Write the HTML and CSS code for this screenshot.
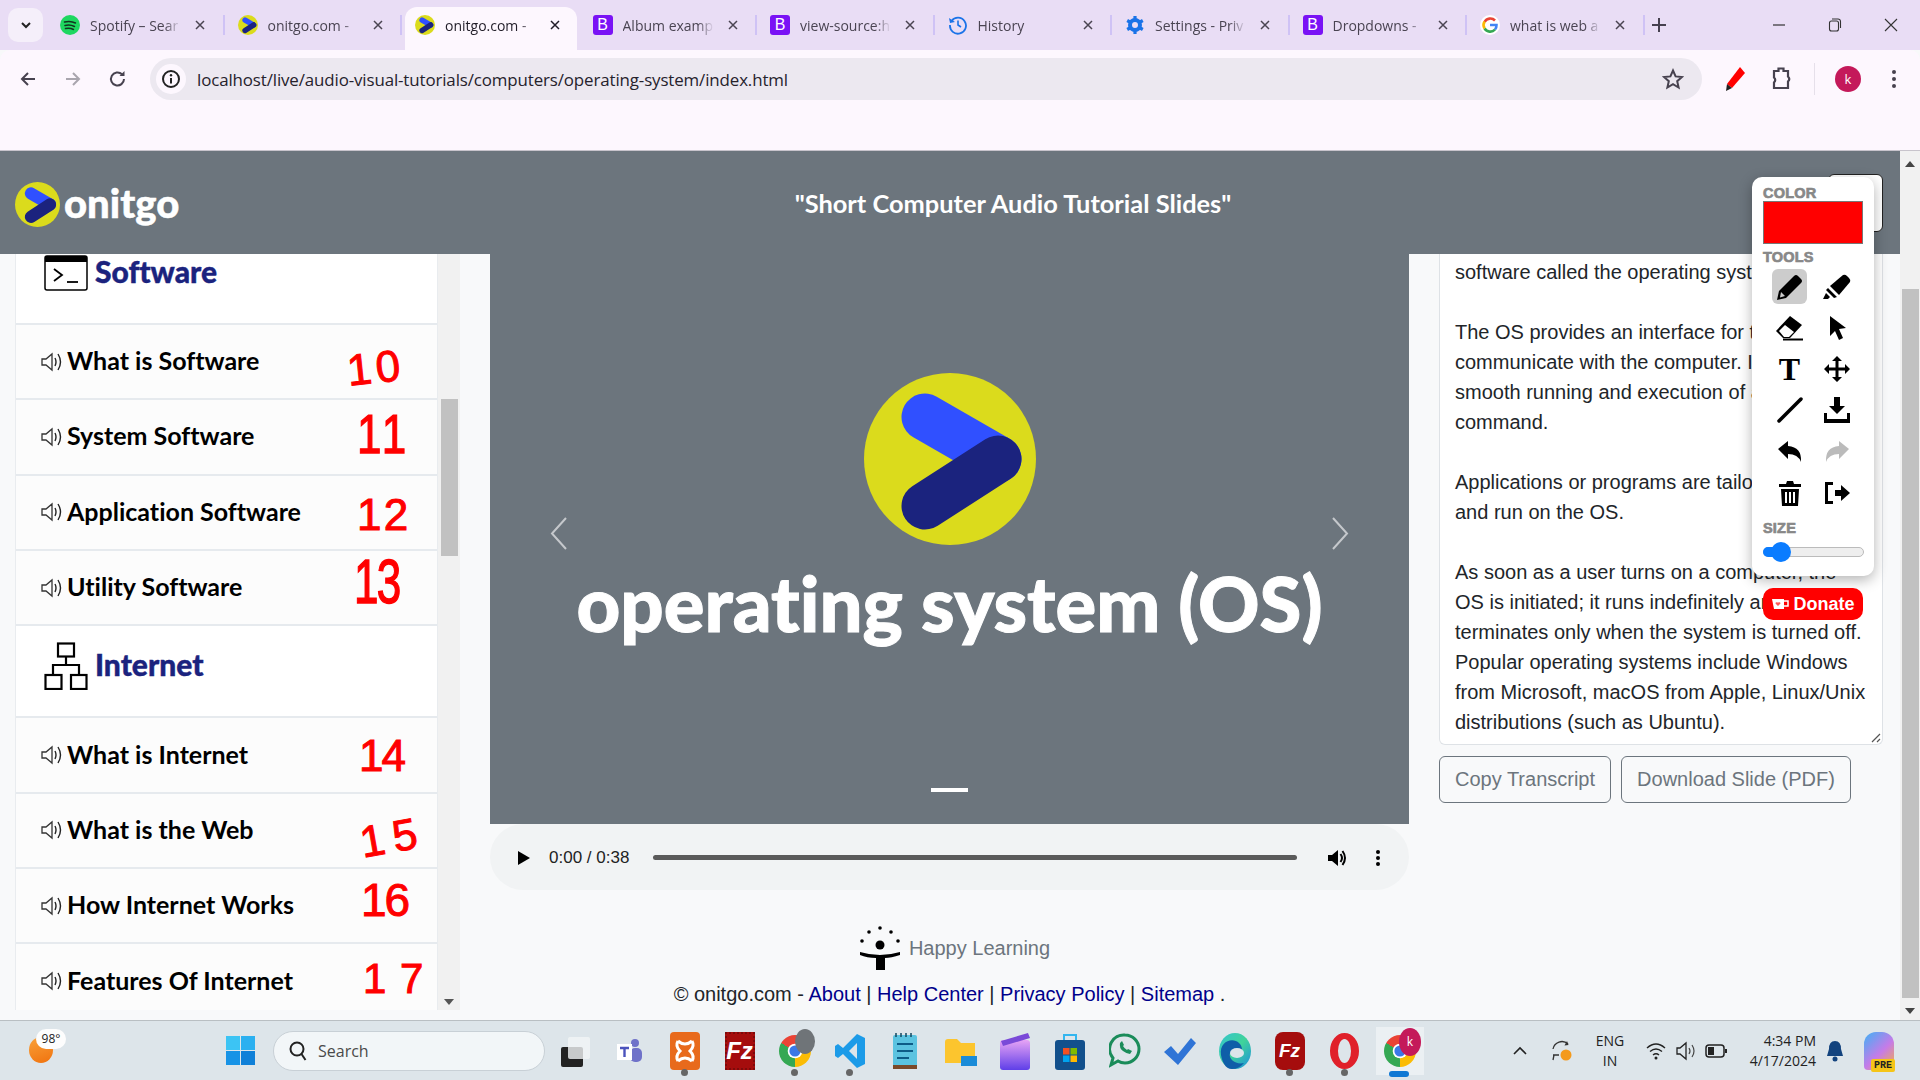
FILE: index.html
```html
<!DOCTYPE html>
<html lang="en">
<head>
<meta charset="utf-8">
<title>onitgo.com - Operating System</title>
<link rel="stylesheet" href="styles.css">
</head>
<body>
<svg class="defs" width="0" height="0" aria-hidden="true">
  <defs>
    <symbol id="onitgo" viewBox="0 0 172 172">
      <circle cx="86" cy="86" r="86" fill="#dbdb1c"/>
      <path d="M61 44 L134 86" stroke="#3050ff" stroke-width="47" stroke-linecap="round"/>
      <path d="M61 133 L134 86" stroke="#1b237e" stroke-width="47" stroke-linecap="round"/>
    </symbol>
    <symbol id="speaker" viewBox="0 0 22 20">
      <path d="M1 7h4l6-5v16l-6-5H1z" fill="none" stroke="#333" stroke-width="1.3"/>
      <path d="M14 6q2 4 0 8M17 2q5 8 0 16" fill="none" stroke="#222" stroke-width="1.4"/>
    </symbol>
    <symbol id="close" viewBox="0 0 12 12">
      <path d="M2 2l8 8M10 2l-8 8" stroke="currentColor" stroke-width="1.5"/>
    </symbol>
    <symbol id="chrome-arc" viewBox="0 0 24 24">
      <circle cx="12" cy="12" r="5.500" fill="#fff"/>
      <circle cx="12" cy="12" r="4.200" fill="#3b78e7"/>
    </symbol>
  </defs>
</svg>

<div class="screen">
  <header class="tabstrip">
    <button class="tablist"><svg width="14" height="14" viewBox="0 0 14 14"><path d="M3 5l4 4 4-4" fill="none" stroke="#222" stroke-width="2"/></svg></button>
    <div class="tab sep">
      <svg class="fav" viewBox="0 0 20 20"><circle cx="10" cy="10" r="10" fill="#1ed760"/><path d="M4.500 7q6-1.600 11 1M5 10.500q5-1.300 9.500 1M5.500 13.500q4.500-1 8 1" stroke="#12331f" stroke-width="1.500" fill="none" stroke-linecap="round"/></svg>
      <span class="tab-title">Spotify – Sear</span><svg class="tab-x"><use href="#close"/></svg>
    </div>
    <div class="tab sep">
      <svg class="fav"><use href="#onitgo"/></svg>
      <span class="tab-title">onitgo.com -</span><svg class="tab-x"><use href="#close"/></svg>
    </div>
    <div class="tab active">
      <svg class="fav"><use href="#onitgo"/></svg>
      <span class="tab-title">onitgo.com -</span><svg class="tab-x"><use href="#close"/></svg>
    </div>
    <div class="tab sep">
      <span class="fav fav-b">B</span>
      <span class="tab-title">Album examp</span><svg class="tab-x"><use href="#close"/></svg>
    </div>
    <div class="tab sep">
      <span class="fav fav-b">B</span>
      <span class="tab-title">view-source:h</span><svg class="tab-x"><use href="#close"/></svg>
    </div>
    <div class="tab sep">
      <svg class="fav" viewBox="0 0 20 20"><path d="M3.500 6A8 8 0 1 1 2 10" fill="none" stroke="#1a73e8" stroke-width="1.800"/><path d="M1 3l1 5 5-1z" fill="#1a73e8"/><path d="M10 5.500V10l3 2" fill="none" stroke="#1a73e8" stroke-width="1.600"/></svg>
      <span class="tab-title">History</span><svg class="tab-x"><use href="#close"/></svg>
    </div>
    <div class="tab sep">
      <svg class="fav" viewBox="0 0 20 20"><circle cx="10" cy="10" r="5" fill="none" stroke="#1a73e8" stroke-width="4"/><path d="M10 1v18M2.200 5.500l15.600 9M17.800 5.500l-15.600 9" stroke="#1a73e8" stroke-width="3.200" stroke-dasharray="3.500 11 3.500"/></svg>
      <span class="tab-title">Settings - Priv</span><svg class="tab-x"><use href="#close"/></svg>
    </div>
    <div class="tab sep">
      <span class="fav fav-b">B</span>
      <span class="tab-title">Dropdowns -</span><svg class="tab-x"><use href="#close"/></svg>
    </div>
    <div class="tab sep">
      <svg class="fav" viewBox="0 0 20 20"><circle cx="10" cy="10" r="10" fill="#fff"/><path d="M15 5.500A6.500 6.500 0 0 0 4.600 7" fill="none" stroke="#ea4335" stroke-width="2.600"/><path d="M4.600 6.500a6.500 6.500 0 0 0 0 7" fill="none" stroke="#fbbc05" stroke-width="2.600"/><path d="M4.600 13.500A6.500 6.500 0 0 0 15 14.500" fill="none" stroke="#34a853" stroke-width="2.600"/><path d="M15 14.500a6.500 6.500 0 0 0 1.500-4.500H10" fill="none" stroke="#4285f4" stroke-width="2.600"/></svg>
      <span class="tab-title">what is web a</span><svg class="tab-x"><use href="#close"/></svg>
    </div>
    <svg class="newtab" width="16" height="16" viewBox="0 0 16 16"><path d="M8 1v14M1 8h14" stroke="#46404f" stroke-width="2"/></svg>
    <div class="winctl">
      <svg width="14" height="14" viewBox="0 0 14 14"><path d="M1 7h12" stroke="#333" stroke-width="1.200"/></svg>
      <svg width="14" height="14" viewBox="0 0 14 14"><rect x="1.500" y="3" width="9" height="10" rx="2" fill="none" stroke="#333" stroke-width="1.100"/><path d="M4 1h6a2.500 2.500 0 0 1 2.500 2.500V10" fill="none" stroke="#333" stroke-width="1.100"/></svg>
      <svg width="14" height="14" viewBox="0 0 14 14"><path d="M1 1l12 12M13 1L1 13" stroke="#333" stroke-width="1.100"/></svg>
    </div>
  </header>

  <nav class="toolbar">
    <svg class="nav-ic" viewBox="0 0 20 20"><path d="M17 10H4M10 4l-6 6 6 6" fill="none" stroke="#47424f" stroke-width="2"/></svg>
    <svg class="nav-ic" viewBox="0 0 20 20"><path d="M3 10h13M10 4l6 6-6 6" fill="none" stroke="#a9a5ae" stroke-width="2"/></svg>
    <svg class="nav-ic" viewBox="0 0 20 20"><path d="M16 10a6.500 6.500 0 1 1-2-4.700" fill="none" stroke="#47424f" stroke-width="2"/><path d="M16.500 2v5h-5z" fill="#47424f"/></svg>
    <div class="omnibox">
      <span class="site-info"><svg width="20" height="20" viewBox="0 0 20 20"><circle cx="10" cy="10" r="8" fill="none" stroke="#222" stroke-width="2"/><path d="M10 9v5.500" stroke="#222" stroke-width="2"/><circle cx="10" cy="6.300" r="1.200" fill="#222"/></svg></span>
      <span class="url">localhost/live/audio-visual-tutorials/computers/operating-system/index.html</span>
      <svg class="star" width="22" height="22" viewBox="0 0 22 22"><path d="M11 2.500l2.600 5.900 6.400.6-4.800 4.200 1.400 6.300L11 16.200l-5.600 3.300 1.400-6.300L2 9l6.400-.6z" fill="none" stroke="#47424f" stroke-width="2"/></svg>
    </div>
    <svg class="ext-pen" width="24" height="26" viewBox="0 0 24 26"><path d="M17 1l5 6-13 15-5-4z" fill="#f00"/><path d="M4 18l5 4-6 3z" fill="#222"/></svg>
    <svg class="ext-puzzle" width="22" height="24" viewBox="0 0 22 24"><path d="M4 4h4.500V1.500h5V4H18v5.500q2.500 2.500 0 5V21H4v-5.500q2.500-2.500 0-5z" fill="none" stroke="#47424f" stroke-width="2.200"/></svg>
    <span class="tb-div"></span>
    <span class="avatar">k</span>
    <svg class="kebab" width="6" height="20" viewBox="0 0 6 20"><circle cx="3" cy="3" r="2" fill="#47424f"/><circle cx="3" cy="10" r="2" fill="#47424f"/><circle cx="3" cy="17" r="2" fill="#47424f"/></svg>
  </nav>

  <div class="viewport">
    <div class="page">
      <div class="site-header">
        <svg class="brand-mark"><use href="#onitgo"/></svg>
        <span class="brand-name">onitgo</span>
        <h1 class="site-title">"Short Computer Audio Tutorial Slides"</h1>
        <span class="header-btn"></span>
      </div>
      <div class="columns">
        <aside class="sidebar">
          <ul class="lesson-list">
            <li class="group group-first">
              <svg class="group-ic" viewBox="0 0 44 36"><rect x="1" y="1" width="42" height="34" rx="2" fill="#fff" stroke="#000" stroke-width="1.500"/><rect x="1" y="1" width="42" height="6" fill="#000"/><path d="M10 14l8 6-8 6" fill="none" stroke="#000" stroke-width="1.800"/><path d="M23 27h11" stroke="#000" stroke-width="1.800"/></svg>
              <span class="group-name">Software</span>
            </li>
            <li class="lesson"><svg class="spk"><use href="#speaker"/></svg><span>What is Software</span><span class="ink ink-10">1 0</span></li>
            <li class="lesson"><svg class="spk"><use href="#speaker"/></svg><span>System Software</span><span class="ink ink-11">1 1</span></li>
            <li class="lesson"><svg class="spk"><use href="#speaker"/></svg><span>Application Software</span><span class="ink ink-12">1 2</span></li>
            <li class="lesson"><svg class="spk"><use href="#speaker"/></svg><span>Utility Software</span><span class="ink ink-13">1 3</span></li>
            <li class="group group-net">
              <svg class="group-ic net" viewBox="0 0 44 48"><g fill="none" stroke="#000" stroke-width="2.200"><rect x="14" y="1.500" width="16" height="13"/><rect x="1.500" y="33" width="16" height="14"/><rect x="27" y="33" width="15.500" height="14"/><path d="M22 15v8M9 33v-10h26v10"/></g></svg>
              <span class="group-name">Internet</span>
            </li>
            <li class="lesson"><svg class="spk"><use href="#speaker"/></svg><span>What is Internet</span><span class="ink ink-14">14</span></li>
            <li class="lesson"><svg class="spk"><use href="#speaker"/></svg><span>What is the Web</span><span class="ink ink-15">1 5</span></li>
            <li class="lesson"><svg class="spk"><use href="#speaker"/></svg><span>How Internet Works</span><span class="ink ink-16">16</span></li>
            <li class="lesson"><svg class="spk"><use href="#speaker"/></svg><span>Features Of Internet</span><span class="ink ink-17">1 7</span></li>
          </ul>
          <div class="side-scroll">
            <span class="side-thumb"></span>
            <svg class="side-down" width="10" height="6" viewBox="0 0 10 6"><path d="M0 0h10L5 6z" fill="#555"/></svg>
          </div>
        </aside>

        <main class="center">
          <section class="slide">
            <svg class="slide-logo"><use href="#onitgo"/></svg>
            <div class="slide-title">operating system (OS)</div>
            <svg class="slide-arrow prev" width="18" height="33" viewBox="0 0 18 33"><path d="M16 1L2 16.500 16 32" fill="none" stroke="#c5c8cc" stroke-width="2"/></svg>
            <svg class="slide-arrow next" width="18" height="33" viewBox="0 0 18 33"><path d="M2 1l14 15.500L2 32" fill="none" stroke="#c5c8cc" stroke-width="2"/></svg>
            <span class="slide-dot"></span>
          </section>
          <div class="audio">
            <svg width="14" height="16" viewBox="0 0 14 16"><path d="M1 1l12 7-12 7z" fill="#000"/></svg>
            <span class="audio-time">0:00 / 0:38</span>
            <span class="audio-bar"></span>
            <svg class="audio-vol" width="22" height="22" viewBox="0 0 22 22"><path d="M2 8h4l6-5v16l-6-5H2z" fill="#000"/><path d="M14.500 7q3 4 0 8M16.500 4q5 7 0 14" fill="none" stroke="#000" stroke-width="2"/></svg>
            <svg class="audio-more" width="6" height="18" viewBox="0 0 6 18"><circle cx="3" cy="3" r="2" fill="#000"/><circle cx="3" cy="9" r="2" fill="#000"/><circle cx="3" cy="15" r="2" fill="#000"/></svg>
          </div>
          <div class="happy">
            <svg width="42" height="44" viewBox="0 0 42 44"><g fill="#000"><circle cx="21" cy="2" r="1.800"/><circle cx="10" cy="6" r="1.800"/><circle cx="32" cy="6" r="1.800"/><circle cx="3" cy="15" r="1.800"/><circle cx="39" cy="15" r="1.800"/><circle cx="21" cy="19" r="4.500"/><path d="M1 26q20 6 40 0v3q-9 3-15 3v12h-9V32Q8 32 1 29z"/></g></svg>
            <span>Happy Learning</span>
          </div>
          <p class="copyright">© onitgo.com - <a href="#a">About</a> | <a href="#h">Help Center</a> | <a href="#p">Privacy Policy</a> | <a href="#s">Sitemap</a> .</p>
        </main>

        <section class="transcript-col">
          <div class="transcript">software called the operating system.<br><br>The OS provides an interface for the user to<br>communicate with the computer. It ensures<br>smooth running and execution of a given<br>command.<br><br>Applications or programs are tailored to the OS<br>and run on the OS.<br><br>As soon as a user turns on a computer, the<br>OS is initiated; it runs indefinitely and<br>terminates only when the system is turned off.<br>Popular operating systems include Windows<br>from Microsoft, macOS from Apple, Linux/Unix<br>distributions (such as Ubuntu).
            <svg class="resize" width="12" height="12" viewBox="0 0 12 12"><path d="M11 3L3 11M11 8l-3 3" stroke="#555" stroke-width="1.200"/></svg>
          </div>
          <div class="actions">
            <button class="btn-outline">Copy Transcript</button>
            <button class="btn-outline">Download Slide (PDF)</button>
          </div>
        </section>
      </div>
    </div>
    <div class="page-scroll">
      <svg width="10" height="6" viewBox="0 0 10 6"><path d="M5 0l5 6H0z" fill="#444"/></svg>
      <span class="page-thumb"></span>
      <svg width="10" height="6" viewBox="0 0 10 6"><path d="M0 0h10L5 6z" fill="#444"/></svg>
    </div>
  </div>

  <footer class="taskbar">
    <div class="tb-weather"><span class="sun"></span><span class="temp">98°</span></div>
    <svg class="tb-start" viewBox="0 0 29 29"><g fill="#1793e6"><rect width="14" height="14" fill="#3cc4f4"/><rect x="15" width="14" height="14" fill="#2bb0f0"/><rect y="15" width="14" height="14"/><rect x="15" y="15" width="14" height="14" fill="#0f80d8"/></g></svg>
    <div class="tb-search"><svg width="20" height="22" viewBox="0 0 20 22"><circle cx="9" cy="9" r="6.500" fill="none" stroke="#222" stroke-width="2"/><path d="M13.500 14l4 6" stroke="#222" stroke-width="2"/></svg><span>Search</span></div>
    <div class="tb-apps">
      <span class="app"><svg width="32" height="32" viewBox="0 0 32 32"><rect x="2" y="12" width="22" height="20" rx="2" fill="#222"/><rect x="9" y="2" width="22" height="22" rx="2" fill="#f3f5f6" fill-opacity=".8"/></svg></span>
      <span class="app"><svg width="30" height="30" viewBox="0 0 30 30"><circle cx="20" cy="7" r="4" fill="#6f72c9"/><rect x="15" y="12" width="12" height="14" rx="5" fill="#6f72c9"/><rect x="2" y="8" width="15" height="16" fill="#fff"/><path d="M5 12h9M9.500 12v9" stroke="#4b53bc" stroke-width="2.400"/></svg></span>
      <span class="app dot"><svg width="30" height="38" viewBox="0 0 30 38"><rect width="30" height="38" rx="4" fill="#e86a1c"/><path d="M8 9q7 6 14 0M8 29q7-6 14 0M8 9q-3 5 2 10q-5 5-2 10M22 9q3 5-2 10q5 5 2 10" fill="none" stroke="#fff" stroke-width="3"/></svg></span>
      <span class="app"><span class="fz">Fz</span></span>
      <span class="app dot"><span class="chrome"><svg width="32" height="32"><use href="#chrome-arc"/></svg></span><span class="disc"></span></span>
      <span class="app dot"><svg width="30" height="36" viewBox="0 0 30 36"><path d="M22 1l8 4v26l-8 4-14-14-5 4-3-2V13l3-2 5 4zM22 10l-8 8 8 8z" fill="#1c9be8"/></svg></span>
      <span class="app"><svg width="24" height="38" viewBox="0 0 24 38"><rect y="3" width="24" height="32" rx="2" fill="#5bc3e0"/><rect y="33" width="24" height="4" fill="#7a4a2a"/><path d="M4 12h16M4 19h16M4 26h12" stroke="#0d5c86" stroke-width="2"/><path d="M3 1v4M8 1v4M13 1v4M18 1v4" stroke="#12475f" stroke-width="1.500"/></svg></span>
      <span class="app"><svg width="34" height="30" viewBox="0 0 34 30"><path d="M2 6a3 3 0 0 1 3-3h9l4 4h14v20H2z" fill="#fcc52e"/><rect x="18" y="20" width="16" height="10" fill="#1a8bd8"/></svg></span>
      <span class="app"><svg width="30" height="38" viewBox="0 0 30 38"><defs><linearGradient id="clipg" x1="0" y1="0" x2="0" y2="1"><stop offset="0" stop-color="#e7a4f5"/><stop offset="1" stop-color="#5f3fe8"/></linearGradient></defs><rect y="8" width="30" height="30" rx="3" fill="url(#clipg)"/><path d="M1 9L28 1l2 5L3 14z" fill="#7a4ad8"/></svg></span>
      <span class="app"><svg width="30" height="38" viewBox="0 0 30 38"><path d="M9 8V3h12v5" fill="none" stroke="#33b6ef" stroke-width="2"/><rect y="8" width="30" height="30" rx="3" fill="#12508c"/><rect x="8" y="16" width="6.500" height="6.500" fill="#f25022"/><rect x="15.500" y="16" width="6.500" height="6.500" fill="#7fba00"/><rect x="8" y="23.500" width="6.500" height="6.500" fill="#00a4ef"/><rect x="15.500" y="23.500" width="6.500" height="6.500" fill="#ffb900"/></svg></span>
      <span class="app"><svg width="32" height="36" viewBox="0 0 32 36"><path d="M16 2a14 14 0 0 1 0 28q-4 0-7-2l-7 4 2-7a14 14 0 0 1 12-23z" fill="none" stroke="#1a8c5a" stroke-width="3"/><path d="M11 10q-1 5 3 8t7 3l2-3-4-2-1 1q-3-2-4-4l1-1-2-4z" fill="#1a8c5a"/></svg></span>
      <span class="app"><svg width="32" height="28" viewBox="0 0 32 28"><path d="M0 15l7-6 7 8L27 1l5 5-18 22z" fill="#2f74d6"/></svg></span>
      <span class="app"><svg width="32" height="36" viewBox="0 0 32 36"><defs><linearGradient id="edgeg" x1="0" y1="0" x2="1" y2="1"><stop offset="0" stop-color="#35c5d0"/><stop offset=".5" stop-color="#3fd39a"/><stop offset="1" stop-color="#1c8ee0"/></linearGradient></defs><ellipse cx="16" cy="18" rx="16" ry="18" fill="url(#edgeg)"/><path d="M2 22C0 8 14 4 20 10c5 5 3 10-2 10H11c-2 6 6 12 14 10q-5 6-12 6C6 36 3 28 2 22z" fill="#0f5ea8"/><ellipse cx="18" cy="20" rx="7" ry="5" fill="#dde5ea"/></svg></span>
      <span class="app dot"><span class="fzs">Fz</span></span>
      <span class="app dot"><span class="opera"></span></span>
      <span class="app active-app"><span class="chrome"><svg width="32" height="32"><use href="#chrome-arc"/></svg></span><span class="app-k">k</span></span>
    </div>
    <div class="tray">
      <svg width="16" height="10" viewBox="0 0 16 10"><path d="M2 8l6-6 6 6" fill="none" stroke="#222" stroke-width="1.600"/></svg>
      <svg class="tray-sync" width="24" height="24" viewBox="0 0 24 24"><path d="M3 10a9 9 0 0 1 15-5M4 16l-1 5M3 16h6" fill="none" stroke="#333" stroke-width="1.300"/><path d="M17 2l1.500 4-4 .5z" fill="#333"/><circle cx="16" cy="16" r="5.500" fill="#f49a1c"/></svg>
      <span class="lang">ENG<br>IN</span>
      <svg width="22" height="20" viewBox="0 0 22 20"><path d="M2 7q9-8 18 0M5 10.500q6-5 12 0M8 14q3-2.500 6 0" fill="none" stroke="#222" stroke-width="1.400"/><circle cx="11" cy="17" r="1.500" fill="#222"/></svg>
      <svg width="22" height="20" viewBox="0 0 22 20"><path d="M2 7h3l6-5v16l-6-5H2z" fill="none" stroke="#222" stroke-width="1.300"/><path d="M14 7q2 3 0 6M17 4q4 6 0 12" fill="none" stroke="#444" stroke-width="1.200"/></svg>
      <svg width="22" height="14" viewBox="0 0 22 14"><rect x="1" y="1" width="18" height="12" rx="3" fill="none" stroke="#222" stroke-width="1.500"/><rect x="3" y="3" width="6" height="8" fill="#222"/><rect x="20" y="5" width="2" height="4" fill="#222"/></svg>
      <span class="clock">4:34 PM<br>4/17/2024</span>
      <svg width="18" height="22" viewBox="0 0 18 22"><path d="M9 1q6 0 6 8l2 7H1l2-7q0-8 6-8z" fill="#13437e"/><circle cx="9" cy="19" r="2.500" fill="#13437e"/></svg>
      <span class="copilot"><span class="pre">PRE</span></span>
    </div>
  </footer>

  <aside class="palette">
    <div class="pal-label">COLOR</div>
    <div class="pal-swatch"></div>
    <div class="pal-label pal-tools">TOOLS</div>
    <div class="pal-grid">
      <span class="pal-btn selected"><svg width="28" height="28" viewBox="0 0 28 28"><path d="M1 27l2-9L18 3q2-2 4 0l3 3q2 2 0 4L10 25z"/><path d="M5 19l4 4-5 1.500z" fill="#ccc"/></svg></span>
      <span class="pal-btn"><svg width="28" height="28" viewBox="0 0 28 28"><path d="M7 13L20 2q2-1 4 1l2 2q2 2 1 4L16 22z"/><path d="M5 15l9 9-3 1-8-8zM3 20l4 4-2 2H0z"/></svg></span>
      <span class="pal-btn"><svg width="28" height="28" viewBox="0 0 28 28"><path d="M0 17L14 2l12 9-12 13H7z" fill="#000"/><path d="M3 17l6-6 9 7-5 5H8z" fill="#fff"/><path d="M7 25.500h20" stroke="#000" stroke-width="2"/></svg></span>
      <span class="pal-btn"><svg width="28" height="28" viewBox="0 0 28 28"><path d="M7 2l16 12-7 1 4 9-4 2-4-9-5 5z"/></svg></span>
      <span class="pal-btn pal-t">T</span>
      <span class="pal-btn"><svg width="28" height="28" viewBox="0 0 28 28"><path d="M14 1l5 5h-3.500v6.500H22V9l5 5-5 5v-3.500h-6.500V22H19l-5 5-5-5h3.500v-6.500H6V19l-5-5 5-5v3.500h6.500V6H9z"/></svg></span>
      <span class="pal-btn"><svg width="28" height="28" viewBox="0 0 28 28"><path d="M3 25L25 3" stroke="#000" stroke-width="3.500" stroke-linecap="round"/></svg></span>
      <span class="pal-btn"><svg width="28" height="28" viewBox="0 0 28 28"><path d="M11 1h6v9h5l-8 8-8-8h5zM1 17h3v6h20v-6h3v10H1z"/></svg></span>
      <span class="pal-btn"><svg width="28" height="28" viewBox="0 0 28 28"><path d="M2 11L12 3v5q14 1 13 16-3-8-13-8v5z"/></svg></span>
      <span class="pal-btn"><svg width="28" height="28" viewBox="0 0 28 28"><path d="M26 11L16 3v5Q2 9 3 24q3-8 13-8v5z" fill="#bbb"/></svg></span>
      <span class="pal-btn"><svg width="28" height="28" viewBox="0 0 28 28"><path d="M3 5h7l1-3h6l1 3h7v3H3zM5 10h18l-1 17H6zM9 13v11h2V13zM13 13v11h2V13zM17 13v11h2V13z" fill-rule="evenodd"/></svg></span>
      <span class="pal-btn"><svg width="28" height="28" viewBox="0 0 28 28"><path d="M2 3h8v3H5v16h5v3H2zM12 11h6V6l9 8-9 8v-5h-6z"/></svg></span>
    </div>
    <div class="pal-label pal-size">SIZE</div>
    <div class="pal-slider"><span class="pal-fill"></span><span class="pal-thumb"></span></div>
  </aside>

  <a class="donate" href="#d"><svg width="18" height="14" viewBox="0 0 18 14"><path d="M1 2h12v10H3z" fill="#fff"/><path d="M13 4h4v5h-4" fill="none" stroke="#fff" stroke-width="1.500"/><path d="M7 9L4.500 6.500q0-2 2.500-1 2.500-1 2.500 1z" fill="#f55"/></svg>Donate</a>
</div>
</body>
</html>
```

FILE: styles.css
```css
* { box-sizing: border-box; }
html, body { margin: 0; padding: 0; }
body { width: 1920px; height: 1080px; overflow: hidden; font-family: "Liberation Sans", Arial, sans-serif; background: #f8f9fa; }
.defs { position: absolute; }
ul { list-style: none; margin: 0; padding: 0; }
button { font: inherit; cursor: pointer; }
.screen { position: relative; display: flex; flex-direction: column; width: 1920px; height: 1080px; }

/* tab strip */
.tabstrip { display: flex; align-items: flex-end; flex: none; height: 50px; padding-left: 8px; background: #e9ddf5; font-family: "Open Sans", sans-serif; }
.tablist { display: flex; align-items: center; justify-content: center; align-self: flex-start; flex: none; width: 35px; height: 34px; margin: 8px 4px 0 0; padding: 0; border: 0; border-radius: 10px; background: #f5effa; }
.tab { position: relative; display: flex; align-items: center; flex: none; width: 177.500px; height: 43px; padding: 0 0 7px 13px; color: #4a4452; font-size: 14px; }
.tab.sep::after { content: ""; position: absolute; right: 0; top: 8px; width: 2px; height: 20px; background: #cfc2f5; }
.tab.active { width: 171.500px; margin: 0 3px; padding-left: 10px; border-radius: 12px 12px 0 0; background: #fdf7fe; color: #211d28; }
.fav { flex: none; width: 20px; height: 20px; }
.fav-b { display: flex; align-items: center; justify-content: center; border-radius: 3px; background: #7a12f5; color: #fff; font-family: "Liberation Sans", sans-serif; font-size: 16px; }
.tab-title { flex: none; width: 91px; margin-left: 10px; overflow: hidden; white-space: nowrap; -webkit-mask-image: linear-gradient(90deg, #000 82%, transparent); mask-image: linear-gradient(90deg, #000 82%, transparent); }
.tab-x { flex: none; width: 12px; height: 12px; margin-left: 13px; }
.newtab { align-self: center; margin-left: 6px; }
.winctl { display: flex; align-self: center; gap: 42px; margin-left: auto; padding-right: 22px; }

/* toolbar */
.toolbar { display: flex; align-items: flex-start; flex: none; height: 101px; padding-top: 8px; border-bottom: 1px solid #c8c4cc; border-radius: 10px 10px 0 0; background: #fdf7fe; }
.nav-ic { flex: none; width: 20px; height: 20px; margin: 11px 0 0 18px; }
.nav-ic + .nav-ic { margin-left: 25px; }
.omnibox { display: flex; align-items: center; flex: none; width: 1552px; height: 42px; margin-left: 22px; padding-left: 6px; border-radius: 21px; background: #ece8f0; }
.site-info { display: flex; align-items: center; justify-content: center; flex: none; width: 30px; height: 30px; border-radius: 15px; background: #fdf7fe; }
.url { margin-left: 11px; color: #26222c; font-family: "Open Sans", sans-serif; font-size: 16.900px; letter-spacing: -0.120px; white-space: nowrap; }
.star { margin-left: auto; margin-right: 18px; }
.ext-pen { margin: 8px 0 0 21px; }
.ext-puzzle { margin: 9px 0 0 23px; }
.tb-div { width: 1px; height: 32px; margin: 5px 0 0 22px; background: #e6e0ea; }
.avatar { display: flex; align-items: center; justify-content: center; width: 26px; height: 26px; margin: 8px 0 0 20px; border-radius: 50%; background: #c4195a; color: #fff; font-family: "Open Sans", sans-serif; font-size: 13px; }
.kebab { margin: 11px 0 0 30px; }

/* page */
.viewport { display: flex; flex: 1; min-height: 0; }
.page { flex: none; width: 1900px; background: #f8f9fa; }
.site-header { display: flex; align-items: center; height: 103px; padding-left: 15px; background: #6c757d; }
.brand-mark { flex: none; width: 45px; height: 45px; margin-top: 4px; }
.brand-name { flex: none; width: 120px; margin-left: 4px; color: #fff; font-family: Lato, sans-serif; font-size: 40px; font-weight: 900; line-height: 1; font-variant-ligatures: none; -webkit-text-stroke: .5px #fff; }
.site-title { flex: none; width: 620px; margin: 0 0 0 519px; color: #fff; font-family: Lato, sans-serif; font-size: 25.400px; font-weight: 700; font-variant-ligatures: none; text-align: center; white-space: nowrap; }
.header-btn { flex: none; width: 55px; height: 58px; margin-left: 505px; border: 1px solid #222; border-radius: 6px; background: #fff; }
.columns { display: flex; height: 766px; overflow: hidden; }

/* sidebar */
.sidebar { display: flex; flex: none; width: 445px; height: 756px; margin-left: 15px; }
.lesson-list { flex: none; width: 423px; height: 756px; overflow: hidden; border-left: 1px solid #e9ecef; border-right: 1px solid #e9ecef; font-variant-ligatures: none; }
.group { display: flex; align-items: flex-start; border-bottom: 2px solid #e6eaee; background: #fff; }
.group-first { height: 71px; padding: 1px 0 0 28px; }
.group-net { height: 92.300px; padding: 16px 0 0 28px; }
.group-ic { flex: none; width: 44px; height: 36px; }
.group-ic.net { height: 48px; }
.group-name { margin: 0 0 0 7px; color: #1b237e; font-family: Lato, sans-serif; font-size: 30px; font-weight: 900; line-height: 32px; -webkit-text-stroke: .4px #1b237e; }
.group-net .group-name { margin-top: 6px; }
.lesson { position: relative; display: flex; align-items: center; height: 75.300px; padding: 0 0 3px 25px; border-bottom: 2px solid #e6eaee; background: #fcfcfc; color: #000; font-family: Lato, sans-serif; font-size: 25px; font-weight: 700; white-space: nowrap; }
.spk { flex: none; width: 22px; height: 20px; margin: 3px 4px 0 0; }
.ink { position: absolute; color: #f00; font-family: "Liberation Sans", sans-serif; font-weight: 400; font-size: 44px; line-height: 1; -webkit-text-stroke: 1px #f00; white-space: pre; word-spacing: -8px; }
.ink-10 { left: 331px; top: 21px; transform: rotate(-6deg); }
.ink-11 { left: 341px; top: 12px; transform: scaleY(1.250); word-spacing: -12px; }
.ink-12 { left: 341px; top: 17px; word-spacing: -10px; }
.ink-13 { left: 338px; top: 8px; transform: scaleY(1.450); word-spacing: -14px; }
.ink-14 { left: 343px; top: 16px; letter-spacing: -2px; }
.ink-15 { left: 344px; top: 22px; word-spacing: -4px; transform: rotate(-10deg); }
.ink-16 { left: 345px; top: 8px; font-size: 46px; letter-spacing: -2px; }
.ink-17 { left: 347px; top: 14px; font-size: 42px; word-spacing: 2px; }
.side-scroll { position: relative; flex: none; width: 22px; background: #f1f1f1; }
.side-thumb { position: absolute; left: 3px; top: 145px; width: 17px; height: 157px; background: #c1c1c1; }
.side-down { position: absolute; left: 6px; bottom: 5px; }

/* centre */
.center { flex: none; width: 919px; margin-left: 30px; }
.slide { position: relative; display: flex; flex-direction: column; align-items: center; height: 570px; padding-top: 119px; background: #6c757d; }
.slide-logo { flex: none; width: 172px; height: 172px; }
.slide-title { margin-top: 13px; color: #fff; font-family: Lato, sans-serif; font-size: 76px; font-weight: 900; font-variant-ligatures: none; line-height: 90px; white-space: nowrap; -webkit-text-stroke: 1px #fff; }
.slide-arrow { position: absolute; top: 263px; }
.slide-arrow.prev { left: 60px; }
.slide-arrow.next { right: 60px; }
.slide-dot { position: absolute; left: 441px; bottom: 32px; width: 37px; height: 4px; background: #fff; }
.audio { display: flex; align-items: center; height: 66px; padding: 1px 28px 0 27px; border-radius: 33px; background: #f1f3f4; }
.audio-time { margin-left: 18px; color: #222; font-size: 17px; white-space: nowrap; }
.audio-bar { flex: 1; height: 5px; margin: 0 29px 0 24px; border-radius: 3px; background: #5a5a5a; }
.audio-vol { flex: none; }
.audio-more { flex: none; margin-left: 27px; }
.happy { display: flex; align-items: center; justify-content: center; gap: 8px; margin-top: 36px; padding-left: 10px; color: #6c757d; font-size: 20px; }
.copyright { margin: 13px 0 0; color: #212529; font-size: 20px; text-align: center; white-space: nowrap; }
.copyright a { color: #00008b; text-decoration: none; }

/* transcript */
.transcript-col { flex: none; width: 444px; margin-left: 30px; }
.transcript { position: relative; height: 491px; padding: 3px 0 0 15px; border: 1px solid #dee2e6; border-top: 0; border-radius: 0 0 6px 6px; background: #fff; color: #212529; font-size: 20px; line-height: 30px; white-space: nowrap; }
.resize { position: absolute; right: 1px; bottom: 1px; }
.actions { display: flex; gap: 10px; margin-top: 11px; }
.btn-outline { height: 47px; padding: 0 15px; border: 1px solid #6c757d; border-radius: 6px; background: transparent; color: #6c757d; font-size: 20px; white-space: nowrap; }

/* page scrollbar */
.page-scroll { position: relative; display: flex; flex-direction: column; align-items: center; justify-content: space-between; flex: none; width: 20px; padding: 10px 0 6px; background: #f1f1f1; }
.page-thumb { position: absolute; left: 2px; top: 138px; width: 17px; height: 709px; background: #c1c1c1; }

/* taskbar */
.taskbar { display: flex; align-items: center; flex: none; height: 60px; border-top: 1px solid #b9bfc3; background: #dde5ea; font-family: "Open Sans", sans-serif; }
.tb-weather { position: relative; flex: none; width: 226px; height: 59px; }
.sun { position: absolute; left: 29px; top: 16px; width: 24px; height: 26px; border-radius: 50%; background: linear-gradient(160deg, #f9a23a, #f0720e); }
.temp { position: absolute; left: 36px; top: 8px; width: 30px; height: 20px; border-radius: 10px; background: #fdfdfd; color: #222; font-size: 12px; line-height: 20px; text-align: center; }
.tb-start { flex: none; width: 29px; height: 29px; }
.tb-search { display: flex; align-items: center; gap: 10px; flex: none; width: 272px; height: 40px; margin-left: 18px; padding-left: 14px; border: 1px solid #c8d0d6; border-radius: 20px; background: #f2f6f8; color: #4a4a4a; font-size: 16px; }
.tb-apps { display: flex; flex: none; margin-left: 2px; }
.app { position: relative; display: flex; align-items: center; justify-content: center; width: 55px; height: 59px; }
.app.dot::after { content: ""; position: absolute; left: 24px; bottom: 4px; width: 7px; height: 7px; border-radius: 50%; background: #666; }
.fz { display: flex; align-items: center; justify-content: center; width: 30px; height: 38px; border: 2px dotted #7d0a0a; background: #a50d0d; color: #fff; font-family: "Liberation Sans", sans-serif; font-size: 24px; font-style: italic; font-weight: 700; }
.chrome { display: flex; align-items: center; justify-content: center; width: 32px; height: 32px; border-radius: 50%; background: conic-gradient(from -60deg, #ea4335 0 120deg, #fbbc05 120deg 240deg, #34a853 240deg 360deg); }
.disc { position: absolute; left: 28px; top: 8px; width: 20px; height: 25px; border-radius: 50%; background: #6f7478; }
.fzs { display: flex; align-items: center; justify-content: center; width: 30px; height: 38px; border: 3px dotted #a50d0d; border-radius: 8px; background: #a50d0d; color: #fff; font-family: "Liberation Sans", sans-serif; font-size: 19px; font-style: italic; font-weight: 700; }
.opera { width: 29px; height: 36px; border: 6px solid #e0202a; border-left-width: 8px; border-right-width: 8px; border-radius: 50%; }
.active-app { background: linear-gradient(#ebf0f3, #ebf0f3) center / 48px 48px no-repeat; }
.active-app::after { content: ""; position: absolute; left: 17px; bottom: 3px; width: 20px; height: 6px; border-radius: 3px; background: #0f78d4; }
.app-k { position: absolute; left: 27px; top: 7px; width: 22px; height: 28px; border-radius: 50%; background: #c4195a; color: #fff; font-size: 12px; line-height: 28px; text-align: center; }
.tray { display: flex; align-items: center; flex: none; margin-left: 85px; color: #222; font-size: 14px; }
.lang { width: 50px; margin: 0 10px 0 11px; line-height: 20px; text-align: center; }
.tray svg + svg { margin-left: 8px; }
.tray .tray-sync { margin-left: 22px; }
.clock { width: 89px; margin: 0 10px 0 0; line-height: 20px; text-align: right; white-space: nowrap; }
.copilot { position: relative; width: 30px; height: 38px; margin-left: 20px; border-radius: 12px 12px 4px 4px; background: linear-gradient(135deg, #3fb1f5, #c67be8 55%, #f6b23c); }
.pre { position: absolute; right: -1px; bottom: -2px; width: 24px; height: 13px; border-radius: 2px; background: #f5c518; color: #222; font-family: "Liberation Mono", monospace; font-size: 10px; font-weight: 700; line-height: 13px; text-align: center; }

/* floating drawing palette */
.palette { position: absolute; left: 1752px; top: 177px; width: 122px; height: 399px; padding: 9px 0 0 11px; border-radius: 10px; background: #fff; box-shadow: 0 4px 14px rgba(0, 0, 0, .3); }
.pal-label { color: #888; font-family: "Liberation Sans", sans-serif; font-size: 14.500px; font-weight: 700; line-height: 15px; letter-spacing: .2px; -webkit-text-stroke: .7px #888; }
.pal-swatch { width: 100px; height: 43px; border: 1px solid #777; background: #f00; }
.pal-tools { margin-top: 6px; }
.pal-grid { display: grid; grid-template-columns: 47px 47px; grid-auto-rows: 41.300px; margin: 4px 0 0 3px; }
.pal-btn { display: flex; align-items: center; justify-content: center; justify-self: center; width: 35px; height: 35px; border-radius: 6px; }
.pal-btn.selected { background: #ccc; }
.pal-t { color: #000; font-family: "Liberation Serif", serif; font-size: 32px; font-weight: 700; line-height: 30px; }
.pal-size { margin-top: 4px; }
.pal-slider { position: relative; width: 101px; height: 10px; margin-top: 11px; border: 1px solid #bbb; border-radius: 5px; background: #eee; }
.pal-fill { position: absolute; left: -1px; top: -1px; width: 20px; height: 10px; border-radius: 5px; background: #0a7cff; }
.pal-thumb { position: absolute; left: 7px; top: -6px; width: 20px; height: 20px; border-radius: 50%; background: #0a7cff; }
.donate { position: absolute; left: 1763px; top: 588px; display: flex; align-items: center; justify-content: center; gap: 4px; width: 100px; height: 32px; border-radius: 10px; background: #f00; color: #fff; font-size: 18px; font-weight: 700; text-decoration: none; }
```
